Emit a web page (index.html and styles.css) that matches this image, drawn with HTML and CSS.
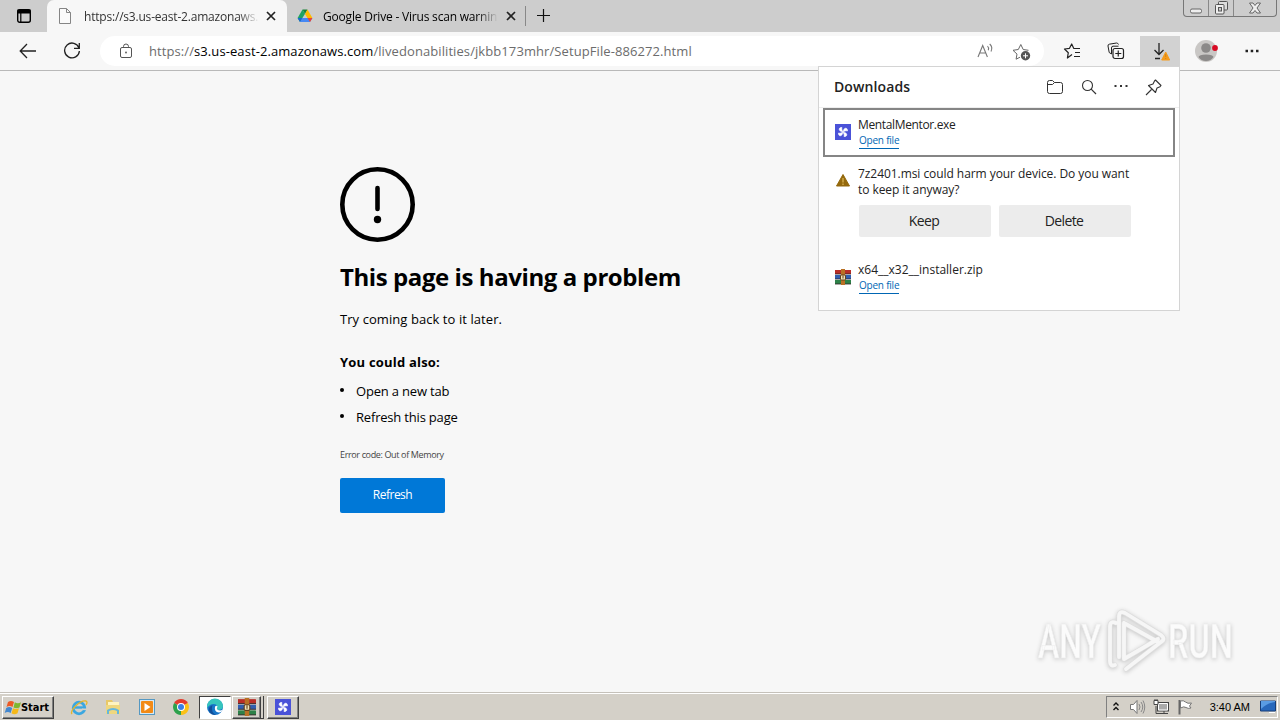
FILE: index.html
```html
<!DOCTYPE html>
<html lang="en">
<head>
  <meta charset="UTF-8">
  <meta name="viewport" content="width=device-width, initial-scale=1.0">
  <title>This page is having a problem</title>
  <link rel="stylesheet" href="styles.css">
</head>
<body>
  <div class="tab-strip">
    <div class="tab-menu">
      <svg width="16" height="16" viewBox="0 0 16 16"><rect x="1.700" y="1.700" width="12.600" height="12.600" rx="2" fill="none" stroke="#000" stroke-width="1.400"/><path d="M2 2h12v3H2zM4.800 5v9" stroke="#000" stroke-width="1.200"/></svg>
    </div>
    <div class="tab active">
      <svg class="tab-icon" width="16" height="18" viewBox="0 0 16 18"><path d="M2.500 1.500h7l4 4v11h-11zM9.500 1.500v4h4" fill="#fafafa" stroke="#858585"/></svg>
      <span class="tab-title first-title">https://s3.us-east-2.amazonaws.</span>
      <svg class="tab-close" width="10" height="10" viewBox="0 0 10 10"><path d="M1 1l8 8M9 1l-8 8" stroke="#222" stroke-width="1.700"/></svg>
    </div>
    <div class="tab inactive">
      <svg class="tab-icon" width="16" height="16" viewBox="0 0 16 16"><path d="M5.500 1.500h5L8 6z" fill="#188038"/><path d="M5.500 1.500L.6 10 3 14l5-8.200z" fill="#1ea362"/><path d="M10.500 1.500l4.900 8.500h-5L8 6z" fill="#ffba00"/><path d="M5.400 10H15.400L13 14H3z" fill="#4688f4"/><path d="M.6 10h4.800L3 14z" fill="#1967d2"/><path d="M10.500 10h4.900L13 14z" fill="#ea4335"/></svg>
      <span class="tab-title second-title">Google Drive - Virus scan warnin</span>
      <svg class="tab-close" width="10" height="10" viewBox="0 0 10 10"><path d="M1 1l8 8M9 1l-8 8" stroke="#222" stroke-width="1.700"/></svg>
    </div>
    <div class="new-tab">
      <svg width="15" height="15" viewBox="0 0 15 15"><path d="M7.500 1v13M1 7.500h13" stroke="#111" stroke-width="1.200"/></svg>
    </div>
    <div class="window-buttons">
      <span class="win-btn"><svg width="14" height="14" viewBox="0 0 14 14"><rect x="1.500" y="8" width="11" height="4" rx="1.500" fill="#eee" stroke="#666"/></svg></span>
      <span class="win-btn"><svg width="14" height="14" viewBox="0 0 14 14"><rect x="4.500" y=".5" width="9" height="8.500" rx="1" fill="#ddd" stroke="#555"/><rect x="1.500" y="3.500" width="8.500" height="9.500" rx="1" fill="#eee" stroke="#555"/><rect x="4.500" y="6.500" width="3" height="3.500" fill="#ccc" stroke="#555"/></svg></span>
      <span class="win-btn wide"><svg width="14" height="12" viewBox="0 0 14 12"><path d="M1.500 1h3.500l2 2.500L9 1h3.500L9 6l3.500 5H9L7 8.500 5 11H1.500L5 6z" fill="#eee" stroke="#666"/></svg></span>
    </div>
  </div>

  <div class="toolbar">
    <svg class="back" width="18" height="16" viewBox="0 0 18 16"><path d="M8 1L1.200 8 8 15M1.200 8H17" fill="none" stroke="#222" stroke-width="1.300"/></svg>
    <svg class="reload" width="18" height="18" viewBox="0 0 18 18"><path d="M16 6A7.400 7.400 0 1 0 16.400 9M16.300 1v5.300H11" fill="none" stroke="#222" stroke-width="1.300"/></svg>
    <div class="address-bar">
      <svg class="lock" width="14" height="17" viewBox="0 0 14 17"><rect x="1.500" y="4.500" width="11" height="10" rx="1.500" fill="none" stroke="#555"/><path d="M4.500 4.500V3.500a2.500 2.500 0 0 1 5 0v1" fill="none" stroke="#555"/><circle cx="7" cy="9.500" r=".9" fill="#555"/></svg>
      <span class="url">https://<b>s3.us-east-2.amazonaws.com</b>/livedonabilities/jkbb173mhr/SetupFile-886272.html</span>
      <svg class="read" width="18" height="16" viewBox="0 0 18 16"><path d="M1 14L5.700 2.500 10.400 14M2.700 10h6M10.500 3.200q1.800 1.600.8 4M12.700 1q3.400 3 1.300 7.500" fill="none" stroke="#777" stroke-width="1.100"/></svg>
      <svg class="star" width="19" height="19" viewBox="0 0 19 19"><path d="M8 15.200l-3.900 2 .9-5.100L1 8.300l5.300-.8L8.800 2.500l2.400 5 5.300.8" fill="none" stroke="#666" stroke-linejoin="round"/><circle cx="13.500" cy="13.800" r="4.700" fill="#555"/><path d="M11 13.800h5M13.500 11.300v5" stroke="#fff"/></svg>
    </div>
    <div class="toolbar-icons">
      <span class="tool"><svg width="18" height="18" viewBox="0 0 18 18"><path d="M10.500 6.500H17M12 10.500h5M11 14.500h6M9 12.500L4.400 16l.9-5.300L1.500 7l5-.7L8.700 2l2.100 4.500" fill="none" stroke="#222" stroke-width="1.200" stroke-linejoin="round"/></svg></span>
      <span class="tool"><svg width="18" height="18" viewBox="0 0 18 18"><path d="M4.500 12L2.200 10.500 1 4Q.8 2.500 2.300 2.200L9.500 1q1.500 0 2 1.500M4.500 12V6Q4.500 4.200 6 4.200H11.500" fill="none" stroke="#222"/><rect x="6" y="6.500" width="10.500" height="10" rx="2" fill="#f7f7f7" stroke="#222" stroke-width="1.200"/><path d="M8.300 11.500h6M11.250 8.500v6" stroke="#222" stroke-width="1.200"/></svg></span>
      <span class="tool pressed"><svg width="20" height="20" viewBox="0 0 20 20"><path d="M9 2v11M4.500 9L9 13.500 13.500 9M5 17.500h5" fill="none" stroke="#222" stroke-width="1.300"/><path d="M15.700 11l4 8h-8z" fill="#f59b1c" stroke="#f59b1c" stroke-linejoin="round"/><path d="M15.700 13v3M15.700 17v1" stroke="#d18618"/></svg></span>
      <span class="tool avatar"><svg width="24" height="24" viewBox="0 0 24 24"><circle cx="11" cy="12" r="11" fill="#c9c7c5"/><circle cx="11" cy="9" r="4.800" fill="#8b8988"/><path d="M3.500 18Q4 15.500 11 15.500T18.500 18Q16 22 11 22T3.500 18z" fill="#8b8988"/><circle cx="20" cy="9" r="2.900" fill="#d80b24"/></svg></span>
      <span class="tool more"><svg width="14" height="4" viewBox="0 0 14 4"><path d="M.5.700h2.500v2.500H.5zM5.700.7h2.500v2.500H5.700zM11 .7h2.500v2.500H11z" fill="#222"/></svg></span>
    </div>
  </div>

  <main class="page">
    <div class="problem">
      <svg class="problem-icon" width="75" height="75" viewBox="0 0 75 75"><circle cx="37.500" cy="37.500" r="35.200" fill="none" stroke="#000" stroke-width="4.600"/><path d="M37.500 21v21" stroke="#000" stroke-width="4.600" stroke-linecap="round"/><circle cx="37.500" cy="52.500" r="3.700"/></svg>
      <h1>This page is having a problem</h1>
      <p class="later">Try coming back to it later.</p>
      <h2>You could also:</h2>
      <ul>
        <li>Open a new tab</li>
        <li>Refresh this page</li>
      </ul>
      <p class="error-code">Error code: Out of Memory</p>
      <button class="refresh">Refresh</button>
    </div>
  </main>

  <section class="downloads">
    <header class="downloads-header">
      <h3>Downloads</h3>
      <svg width="18" height="16" viewBox="0 0 18 16"><path d="M1.500 3.500Q1.500 1.500 3.500 1.500H6.500L8.500 3.500H14.500Q16.500 3.500 16.500 5.500V12.500Q16.500 14.500 14.500 14.500H3.500Q1.500 14.500 1.500 12.500zM1.500 5.500H6.500L8.500 3.500" fill="none" stroke="#333"/></svg>
      <svg width="16" height="16" viewBox="0 0 16 16"><circle cx="6.500" cy="6.500" r="5" fill="none" stroke="#333" stroke-width="1.100"/><path d="M10.200 10.200L15 15" stroke="#333" stroke-width="1.200"/></svg>
      <svg width="14" height="16" viewBox="0 0 14 16"><path d="M.5 6h2v2h-2zM6 6h2v2H6zM11.500 6h2v2h-2z" fill="#333"/></svg>
      <svg width="17" height="17" viewBox="0 0 17 17"><path d="M10.500 1L16 6.500 15 7.700 12 9 10.500 13.500 3.500 6.500 8 5 9.500 2zM6.500 10.500L1 16" fill="none" stroke="#333" stroke-width="1.100" stroke-linejoin="round"/></svg>
    </header>
    <div class="download-item selected">
      <svg class="file-icon" width="16" height="16" viewBox="0 0 16 16"><use href="#pinwheel"/></svg>
      <div class="file-info">
        <div class="file-name mentor">MentalMentor.exe</div>
        <a class="open-file">Open file</a>
      </div>
    </div>
    <div class="download-item warning">
      <svg class="file-icon" width="16" height="14" viewBox="0 0 16 14"><path d="M8 1.500L14.500 13h-13z" fill="#94690c" stroke="#94690c" stroke-linejoin="round"/><path d="M8 5v4.500M8 10.500V12" stroke="#e0b95a" stroke-width="1.200"/></svg>
      <div class="file-info">
        <div class="file-name harm">7z2401.msi could harm your device. Do you want<br>to keep it anyway?</div>
        <div class="choices">
          <button>Keep</button>
          <button>Delete</button>
        </div>
      </div>
    </div>
    <div class="download-item zip">
      <svg class="file-icon" width="16" height="16" viewBox="0 0 16 16"><use href="#books"/></svg>
      <div class="file-info">
        <div class="file-name installer">x64__x32__installer.zip</div>
        <a class="open-file">Open file</a>
      </div>
    </div>
  </section>

  <svg class="watermark" width="214" height="78" viewBox="0 0 214 78">
    <g fill="#fbfbfb" stroke="#ededed" stroke-width=".6">
      <text x="4" y="53" textLength="63" lengthAdjust="spacingAndGlyphs">ANY</text>
      <text x="134" y="53" textLength="65" lengthAdjust="spacingAndGlyphs">RUN</text>
    </g>
    <g fill="none" stroke-linejoin="round" stroke-linecap="round">
      <path d="M82 18q-6-3-6 4v34q0 6 5 4M85 52V12q0-7 6-4l36 22q5 4 0 7L92 64M90 18l34 19M90 18v36l34-20" stroke="#dedede" stroke-width="5"/>
      <path d="M82 18q-6-3-6 4v34q0 6 5 4M85 52V12q0-7 6-4l36 22q5 4 0 7L92 64M90 18l34 19M90 18v36l34-20" stroke="#f6f6f6" stroke-width="3.800"/>
    </g>
  </svg>

  <footer class="taskbar">
    <div class="task-button start">
      <svg width="18" height="17" viewBox="0 0 18 17"><path d="M4 3q3-2 6 0L8.500 8q-3-2-6 0z" fill="#ed5a25"/><path d="M10.800 3.300q3 1.700 6.200 0L15.500 8.500q-3 1.500-6 0z" fill="#7eb730"/><path d="M2.200 9q3-2 6 0l-1.500 5q-3-2-6 0z" fill="#4387cf"/><path d="M9 9.300q3 1.500 6 0l-1.500 5q-3 1.700-6 0z" fill="#f5b819"/></svg>
      <span>Start</span>
    </div>
    <div class="quick-launch">
      <svg width="18" height="18" viewBox="0 0 18 18"><circle cx="9" cy="10" r="5.800" fill="none" stroke="#3ba7e0" stroke-width="2.800"/><path d="M5 9.500h9" stroke="#3ba7e0" stroke-width="2.400"/><path d="M12 11.300h5" stroke="#d4d0c8" stroke-width="1.600"/><path d="M2 16C-1 13 10 2 16 3q2 1 0 4" fill="none" stroke="#e5b52a" stroke-width="1.300"/></svg>
      <svg width="18" height="18" viewBox="0 0 18 18"><path d="M2 2h6l1 2h6v12H2z" fill="#e8c867"/><path d="M4 4h11v5H4z" fill="#fff4c0"/><path d="M2 7h14v9H2z" fill="#efd77e"/><path d="M3 16v-4q6-4 12 0v4h-2v-3q-4-2-8 0v3z" fill="#65b7dd"/></svg>
      <svg width="18" height="18" viewBox="0 0 18 18"><rect x="1.500" y="1.500" width="15" height="15" fill="#d7e9f5" stroke="#5598c2"/><rect x="3" y="3" width="12" height="12" rx="1" fill="#f28a16"/><path d="M6.500 5l6 4-6 4z" fill="#fff"/></svg>
      <svg width="18" height="18" viewBox="0 0 18 18"><path d="M9 9L2.100 5A8 8 0 0 1 15.900 5z" fill="#e33b2e"/><path d="M9 9l6.900-4A8 8 0 0 1 9 17z" fill="#fbc116"/><path d="M9 9v8A8 8 0 0 1 2.100 5z" fill="#2da14c"/><circle cx="9" cy="9" r="4" fill="#fff"/><circle cx="9" cy="9" r="3" fill="#397fe6"/></svg>
    </div>
    <div class="task-button edge">
      <svg width="18" height="18" viewBox="0 0 18 18"><circle cx="9" cy="9" r="8" fill="#1775c8"/><path d="M1 9A8 8 0 0 1 17 8q0 4-5 4-2-1-.7-3Q11 6 7.500 6T1 10z" fill="#37c5bd"/><path d="M9 8.500q2-1.500 2.500 0-1.500 2 .3 3.500 3 1 5-.5-1 3-4 3Q8 14 9 8.500z" fill="#fff"/><path d="M6.500 7Q2 9 3 13q2 4 7 4-5-3-4-8z" fill="#124e98"/></svg>
    </div>
    <div class="task-button rar">
      <svg width="18" height="18" viewBox="0 0 16 16">
        <g id="books"><path d="M0 1h16v4H0z" fill="#b92d27"/><path d="M0 6h16v4H0z" fill="#315eb0"/><path d="M0 11h16v4H0z" fill="#2d8149"/><path d="M0 5h16M0 10h16M0 15h16" stroke="#302525" stroke-width=".8"/><path d="M6 0h4v16H6z" fill="#b97024"/><rect x="5.500" y="6" width="5" height="5" rx="1" fill="#f0e3b8" stroke="#63401c"/><path d="M8 6.500v3" stroke="#63401c"/></g>
      </svg>
    </div>
    <div class="rar-stack"></div>
    <div class="task-button mental">
      <svg width="16" height="16" viewBox="0 0 16 16">
        <g id="pinwheel"><path d="M0 0h16v16H0z" fill="#4a52d8"/><path d="M8 7.500C6 7 4.500 5 5.800 3.500 6.500 3 8 3 8.500 3.500 7.500 4.800 7.600 6 8 7.500zM8.500 8C9 6 11 4.500 12.500 5.800 13 6.500 13 8 12.500 8.500 11.200 7.500 10 7.600 8.500 8zM8 8.500C10 9 11.500 11 10.200 12.500 9.500 13 8 13 7.500 12.500 8.500 11.200 8.400 10 8 8.500zM7.500 8C7 10 5 11.500 3.500 10.200 3 9.500 3 8 3.500 7.500 4.800 8.500 6 8.400 7.500 8z" fill="#fff" stroke="#fff" stroke-width=".7" transform="rotate(-20 8 8)"/></g>
      </svg>
    </div>
    <div class="tray">
      <svg width="8" height="12" viewBox="0 0 8 12"><path d="M1.500 4.500L4 2l2.500 2.500M1.500 9L4 6.500 6.500 9" fill="none" stroke="#111" stroke-width="1.400"/></svg>
      <svg class="speaker" width="18" height="16" viewBox="0 0 18 16"><path d="M1.500 5.500h3L8 1.500v13l-3.500-4h-3z" fill="#fff" stroke="#777"/><path d="M10 5q2 3 0 6M12 3q3.500 5 0 10M14 1.500q3.500 6.500 0 13" fill="none" stroke="#888"/></svg>
      <svg class="network" width="17" height="16" viewBox="0 0 17 16"><rect x="4.500" y="3.500" width="11" height="8.500" fill="#aaa" stroke="#444"/><path d="M5.500 4.500h9v6.500h-9z" fill="none" stroke="#fff"/><path d="M7 14.500h8M11 12v2M3 7v7.500h4" fill="none" stroke="#444"/><path d="M1 1.500h4v4H1zM2 0v2M4 0v2" fill="#fff" stroke="#444"/></svg>
      <svg class="flag" width="16" height="16" viewBox="0 0 16 16"><path d="M2.500 1v14.500" stroke="#666" stroke-width="2"/><path d="M3.500 2q3-1 5 1t6 1l-2 3 1.500 2q-3 1-5-.5T3.500 9z" fill="#fff" stroke="#777"/></svg>
      <span class="clock">3:40 AM</span>
      <svg class="desktop" width="16" height="14" viewBox="0 0 16 14"><path d="M.5 1h15v10H.5z" fill="#2868bc" stroke="#173d78"/><path d="M1 9Q7 3 15 2V1H1z" fill="#5a9ce4"/><path d="M9 12.500h6" stroke="#fff"/></svg>
    </div>
  </footer>
</body>
</html>
```

FILE: styles.css
```css
* {
  box-sizing: border-box;
}

body {
  margin: 0;
  width: 1280px;
  height: 720px;
  overflow: hidden;
  position: relative;
  display: flex;
  flex-direction: column;
  background: #f7f7f7;
  color: #000;
  font-family: "Open Sans", "Noto Sans", sans-serif;
}

svg {
  display: block;
  flex: none;
}

h1, h2, h3, p, ul {
  margin: 0;
  padding: 0;
}

button {
  border: none;
  padding: 0;
  font-family: inherit;
}

/* tabs */
.tab-strip {
  height: 32px;
  flex: none;
  display: flex;
  background: #cdcdcd;
}

.tab-menu {
  width: 47px;
  padding: 8px 0 0 16px;
}

.tab {
  width: 240px;
  display: flex;
  align-items: center;
  padding: 0 11px 0 10px;
}

.tab.active {
  background: #f7f7f7;
  border-radius: 7px 7px 0 0;
}

.tab-title {
  width: 176px;
  margin: 0 7px 0 11px;
  font-size: 12px;
  white-space: nowrap;
  -webkit-mask-image: linear-gradient(to right, #000 88%, transparent);
  mask-image: linear-gradient(to right, #000 88%, transparent);
}

.first-title {
  color: #333;
  letter-spacing: -0.2px;
}

.second-title {
  margin: 0 8px 0 10px;
  letter-spacing: -0.2px;
}

.new-tab {
  height: 20px;
  margin: 6px 0 0 -2px;
  padding: 2px 0 0 10px;
  border-left: 1px solid #888;
}

.window-buttons {
  height: 17px;
  margin: 0 3px 0 auto;
  display: flex;
  border: 1px solid #777;
  border-top: none;
  border-radius: 0 0 4px 4px;
}

.win-btn {
  width: 25px;
  display: flex;
  align-items: center;
  justify-content: center;
  border-right: 1px solid #888;
}

.win-btn.wide {
  width: 42px;
  border-right: none;
}

/* toolbar */
.toolbar {
  height: 39px;
  flex: none;
  display: flex;
  align-items: center;
  border-bottom: 1px solid #b9b9b9;
}

.back {
  margin-left: 19px;
}

.reload {
  margin-left: 26px;
}

.address-bar {
  width: 944px;
  height: 30px;
  margin-left: 19px;
  padding: 0 13px 0 19px;
  display: flex;
  align-items: center;
  background: #fff;
  border-radius: 15px;
}

.url {
  margin-left: 16px;
  font-size: 13px;
  letter-spacing: 0.085px;
  color: #6c6c6c;
  white-space: nowrap;
}

.url b {
  font-weight: normal;
  color: #000;
}

.read {
  margin-left: auto;
}

.star {
  margin-left: 17px;
}

.toolbar-icons {
  flex: 1;
  display: flex;
  margin-left: 6px;
}

.tool {
  width: 44px;
  height: 30px;
  display: flex;
  align-items: center;
  justify-content: center;
}

.tool.pressed {
  width: 40px;
  margin-left: 2px;
  background: #d2d2d2;
}

.tool.avatar {
  width: 54px;
}

.tool.more {
  width: 36px;
}

/* error page */
.page {
  flex: 1;
  padding: 96px 0 0 340px;
}

.problem {
  width: 600px;
}

h1 {
  margin-top: 18px;
  font-size: 24px;
  line-height: 33px;
  font-weight: bold;
  letter-spacing: -0.42px;
}

.later {
  margin-top: 16px;
  font-size: 13px;
  line-height: 20px;
  letter-spacing: 0.07px;
}

h2 {
  margin-top: 23px;
  font-size: 13px;
  line-height: 20px;
  letter-spacing: 0.2px;
}

ul {
  margin-top: 6px;
  list-style: none;
}

li {
  display: flex;
  font-size: 13px;
  line-height: 26px;
  letter-spacing: -0.19px;
}

li::before {
  content: "";
  width: 4px;
  height: 4px;
  margin: 10px 12px 0 0;
  border-radius: 50%;
  background: #000;
}

.error-code {
  margin-top: 18px;
  color: #444;
  font-size: 9px;
  line-height: 14px;
  letter-spacing: -0.36px;
}

.refresh {
  display: block;
  width: 105px;
  height: 35px;
  margin-top: 16px;
  padding-bottom: 2px;
  color: #fff;
  background: #0078d7;
  border-radius: 2px;
  font-size: 12px;
  letter-spacing: -0.5px;
}

/* downloads flyout over the page */
.downloads {
  position: absolute;
  left: 818px;
  top: 66px;
  width: 362px;
  height: 245px;
  background: #fff;
  border: 1px solid #d4d4d4;
  color: #222;
}

.downloads-header {
  height: 41px;
  padding: 0 17px 0 15px;
  display: flex;
  align-items: center;
  gap: 17px;
  border-bottom: 1px solid #eee;
}

h3 {
  margin-right: auto;
  padding-bottom: 2px;
  font-size: 14px;
  font-weight: 600;
  letter-spacing: 0.1px;
}

.download-item {
  display: flex;
  padding-left: 16px;
}

.file-icon {
  margin-right: 8px;
}

.file-name {
  margin-left: -1px;
  font-size: 12px;
  line-height: 16px;
  white-space: nowrap;
}

.mentor {
  letter-spacing: -0.36px;
}

.harm {
  letter-spacing: -0.06px;
}

.download-item.selected {
  width: 352px;
  height: 49px;
  margin-left: 4px;
  padding: 7px 0 0 10px;
  border: 2px solid #858585;
}

.selected .file-icon {
  margin-top: 7px;
}

.open-file {
  display: inline-block;
  vertical-align: top;
  height: 16px;
  color: #0066b4;
  border-bottom: 1px solid #0066b4;
  font-size: 10px;
  line-height: 15px;
  letter-spacing: -0.22px;
}

.download-item.warning {
  margin-top: 9px;
}

.warning .file-icon {
  margin-top: 7px;
}

.choices {
  display: flex;
  gap: 8px;
  margin-top: 7px;
}

.choices button {
  width: 132px;
  height: 32px;
  padding: 0 2px 2px 0;
  background: #ececec;
  border-radius: 2px;
  color: #222;
  font-size: 14px;
  letter-spacing: -0.6px;
}

.download-item.zip {
  margin-top: 25px;
}

.zip .file-icon {
  margin-top: 7px;
}

.watermark {
  position: absolute;
  left: 1034px;
  top: 605px;
  overflow: visible;
  filter: drop-shadow(0 1px 2px #c4c4c4);
}

.watermark text {
  font-family: "Roboto", sans-serif;
  font-size: 49px;
  font-weight: 500;
}

/* taskbar */
.taskbar {
  height: 28px;
  flex: none;
  display: flex;
  align-items: center;
  padding: 1px 2px 0 2px;
  background: #d4d0c8;
  border-top: 1px solid #c5c1ba;
  box-shadow: inset 0 1px #fff;
}

.task-button {
  width: 32px;
  height: 23px;
  display: flex;
  align-items: center;
  justify-content: center;
  border: 1px solid;
  border-color: #fff #404040 #404040 #fff;
  box-shadow: inset -1px -1px #808080;
}

.start {
  width: 52px;
  padding-right: 3px;
  font-family: "DejaVu Sans Condensed", "DejaVu Sans", sans-serif;
  font-size: 11px;
  font-weight: bold;
}

.start span {
  margin-left: -1px;
}

.quick-launch {
  display: flex;
  gap: 16px;
  margin-left: 16px;
}

.edge {
  margin-left: 9px;
  background: #fff;
  border-color: #404040 #fff #fff #404040;
  box-shadow: none;
}

.rar {
  width: 29px;
  margin-left: 1px;
}

/* edge of the second grouped window */
.rar-stack {
  width: 3px;
  height: 23px;
  border-right: 1px solid #404040;
  border-bottom: 1px solid #404040;
}

.mental {
  margin-left: 3px;
}

.tray {
  width: 172px;
  height: 22px;
  margin-left: auto;
  padding: 0 1px 0 5px;
  display: flex;
  align-items: center;
  border: 1px solid;
  border-color: #808080 #fff #fff #808080;
}

.speaker {
  margin-left: 9px;
}

.network {
  margin-left: 6px;
}

.flag {
  margin-left: 7px;
}

.clock {
  margin-left: auto;
  font-family: "Liberation Sans", Arial, sans-serif;
  font-size: 11px;
}

.desktop {
  margin-left: 10px;
}
```
